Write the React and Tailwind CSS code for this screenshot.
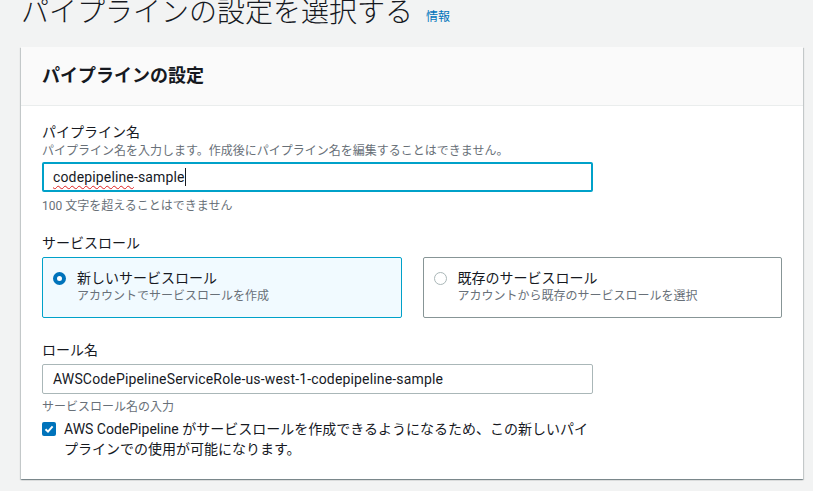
import React from "react";

const font = {
  fontFamily: 'Roboto, "Noto Sans CJK JP", "Noto Sans", sans-serif',
};

const RadioTile = ({ checked, title, desc }) => {
  return (
    <div
      className={
        checked
          ? "h-[61px] border border-[#00a1c9] bg-[#f1faff] rounded-[2px] pt-[10px] pl-[10px] flex"
          : "h-[61px] border border-[#879596] bg-white rounded-[2px] pt-[10px] pl-[10px] flex"
      }
    >
      <div className="w-[24px] h-[20px] flex items-center">
        {checked ? (
          <span className="block w-[13px] h-[13px] rounded-full border-[4px] border-[#0073bb] bg-white" />
        ) : (
          <span className="block w-[13px] h-[13px] rounded-full border-[1.5px] border-[#aab7b8] bg-white" />
        )}
      </div>
      <div>
        <div className="text-[14px] leading-[20px] text-[#16191f]">{title}</div>
        <div className="text-[12px] leading-[16px] text-[#687078]">{desc}</div>
      </div>
    </div>
  );
};

const App = () => {
  return (
    <div className="min-h-[491px] bg-[#f2f3f3] pl-[21px] pr-[10px] overflow-hidden" style={font}>
      <div className="flex items-end -mt-[1px] h-[28px]">
        <h1 className="text-[28px] leading-[28px] font-light text-[#16191f]">
          パイプラインの設定を選択する
        </h1>
        <a className="ml-[13px] mb-[2px] text-[12px] leading-[16px] text-[#0073bb]">情報</a>
      </div>

      <div className="mt-[20px] w-[782px] bg-white shadow-[0_1px_1px_0_rgba(0,28,36,0.3),1px_1px_1px_0_rgba(0,28,36,0.15),-1px_1px_1px_0_rgba(0,28,36,0.15)]">
        <div className="h-[59px] bg-[#fafafa] border-b border-[#eaeded] pl-[21px] flex items-center">
          <h2 className="text-[18px] leading-[22px] font-bold text-[#16191f]">パイプラインの設定</h2>
        </div>

        <div className="px-[21px] pt-[15px] pb-[20px]">
          <label className="block text-[14px] leading-[22px] text-[#16191f]">パイプライン名</label>
          <div className="text-[12px] leading-[16px] text-[#687078]">
            パイプライン名を入力します。作成後にパイプライン名を編集することはできません。
          </div>
          <div className="mt-[3px] w-[551px] h-[30px] border-2 border-[#00a1c9] rounded-[2px] pl-[9px] flex items-center text-[14px] tracking-[0.15px] text-[#16191f]">
            <span className="underline decoration-wavy decoration-[#e02020] decoration-1 underline-offset-[3px]">
              codepipeline
            </span>
            <span>-sample</span>
            <span className="inline-block w-px h-[18px] bg-[#16191f]" />
          </div>
          <div className="mt-[6px] text-[12px] leading-[16px] text-[#687078]">
            100 文字を超えることはできません
          </div>

          <label className="block mt-[18px] text-[14px] leading-[22px] text-[#16191f]">サービスロール</label>
          <div className="mt-[3px] grid grid-cols-2 gap-[21px]">
            <RadioTile checked title="新しいサービスロール" desc="アカウントでサービスロールを作成" />
            <RadioTile title="既存のサービスロール" desc="アカウントから既存のサービスロールを選択" />
          </div>

          <label className="block mt-[21px] text-[14px] leading-[22px] text-[#16191f]">ロール名</label>
          <div className="mt-[3px] w-[551px] h-[30px] border border-[#aab7b8] rounded-[2px] pl-[10px] flex items-center text-[14px] tracking-[0.16px] text-[#16191f]">
            AWSCodePipelineServiceRole-us-west-1-codepipeline-sample
          </div>
          <div className="mt-[5px] text-[12px] leading-[16px] text-[#687078]">サービスロール名の入力</div>

          <div className="mt-[4px] flex">
            <div className="w-[22px] h-[20px] flex items-center">
              <span className="w-[14px] h-[14px] rounded-[2px] bg-[#0073bb] flex items-center justify-center">
                <svg width="10" height="10" viewBox="0 0 10 10">
                  <path d="M1.5 5.2 L4 7.6 L8.6 2.4" fill="none" stroke="white" strokeWidth="2" />
                </svg>
              </span>
            </div>
            <div className="w-[530px] text-[14px] leading-[20px] text-[#16191f]">
              AWS CodePipeline がサービスロールを作成できるようになるため、この新しいパイプラインでの使用が可能になります。
            </div>
          </div>
        </div>
      </div>
    </div>
  );
};

export default App;
